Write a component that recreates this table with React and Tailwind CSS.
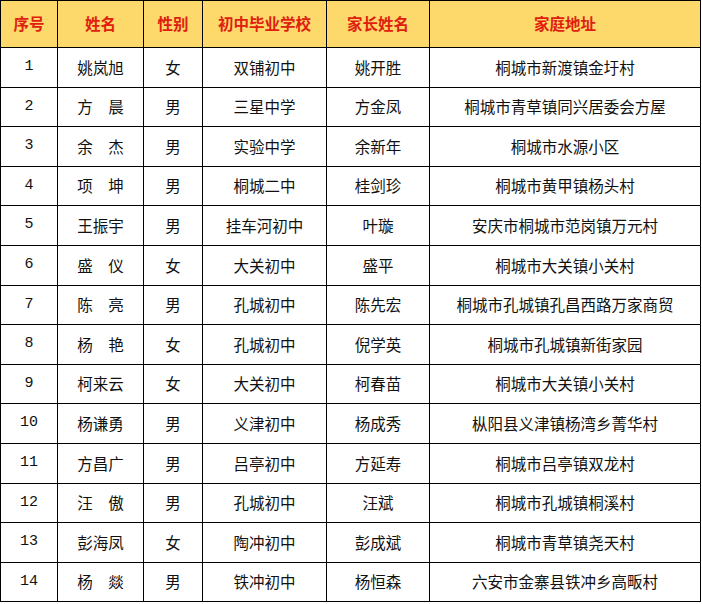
import React from "react";

const rows = [
  ["1", "姚岚旭", "女", "双铺初中", "姚开胜", "桐城市新渡镇金圩村"],
  ["2", "方　晨", "男", "三星中学", "方金凤", "桐城市青草镇同兴居委会方屋"],
  ["3", "余　杰", "男", "实验中学", "余新年", "桐城市水源小区"],
  ["4", "项　坤", "男", "桐城二中", "桂剑珍", "桐城市黄甲镇杨头村"],
  ["5", "王振宇", "男", "挂车河初中", "叶璇", "安庆市桐城市范岗镇万元村"],
  ["6", "盛　仪", "女", "大关初中", "盛平", "桐城市大关镇小关村"],
  ["7", "陈　亮", "男", "孔城初中", "陈先宏", "桐城市孔城镇孔昌西路万家商贸"],
  ["8", "杨　艳", "女", "孔城初中", "倪学英", "桐城市孔城镇新街家园"],
  ["9", "柯来云", "女", "大关初中", "柯春苗", "桐城市大关镇小关村"],
  ["10", "杨谦勇", "男", "义津初中", "杨成秀", "枞阳县义津镇杨湾乡菁华村"],
  ["11", "方昌广", "男", "吕亭初中", "方延寿", "桐城市吕亭镇双龙村"],
  ["12", "汪　傲", "男", "孔城初中", "汪斌", "桐城市孔城镇桐溪村"],
  ["13", "彭海凤", "女", "陶冲初中", "彭成斌", "桐城市青草镇尧天村"],
  ["14", "杨　燚", "男", "铁冲初中", "杨恒森", "六安市金寨县铁冲乡高畈村"],
];

const headers = ["序号", "姓名", "性别", "初中毕业学校", "家长姓名", "家庭地址"];

const App = () => {
  return (
    <div className="w-[702px] h-[604px] bg-white">
      <div
        className="grid grid-cols-[57px_86px_59px_124px_103px_271px] w-[701px] border-l border-t border-black"
        style={{ fontFamily: '"Noto Sans CJK SC", sans-serif' }}
      >
        {headers.map((h) => (
          <div
            key={h}
            className="h-[47px] flex items-center justify-center border-r border-b border-black bg-[#fdd96b] text-[#e0200f] font-bold text-[15.5px]"
          >
            {h}
          </div>
        ))}
        {rows.map((r) =>
          r.map((c, i) => (
            <div
              key={r[0] + "-" + i}
              className={`h-[39.6px] flex items-center justify-center border-r border-b border-black text-[#111] ${
                i === 0 ? "text-[15px] font-['Liberation_Mono',monospace]" : "text-[15.5px]"
              }`}
            >
              {c}
            </div>
          ))
        )}
      </div>
    </div>
  );
};

export default App;
